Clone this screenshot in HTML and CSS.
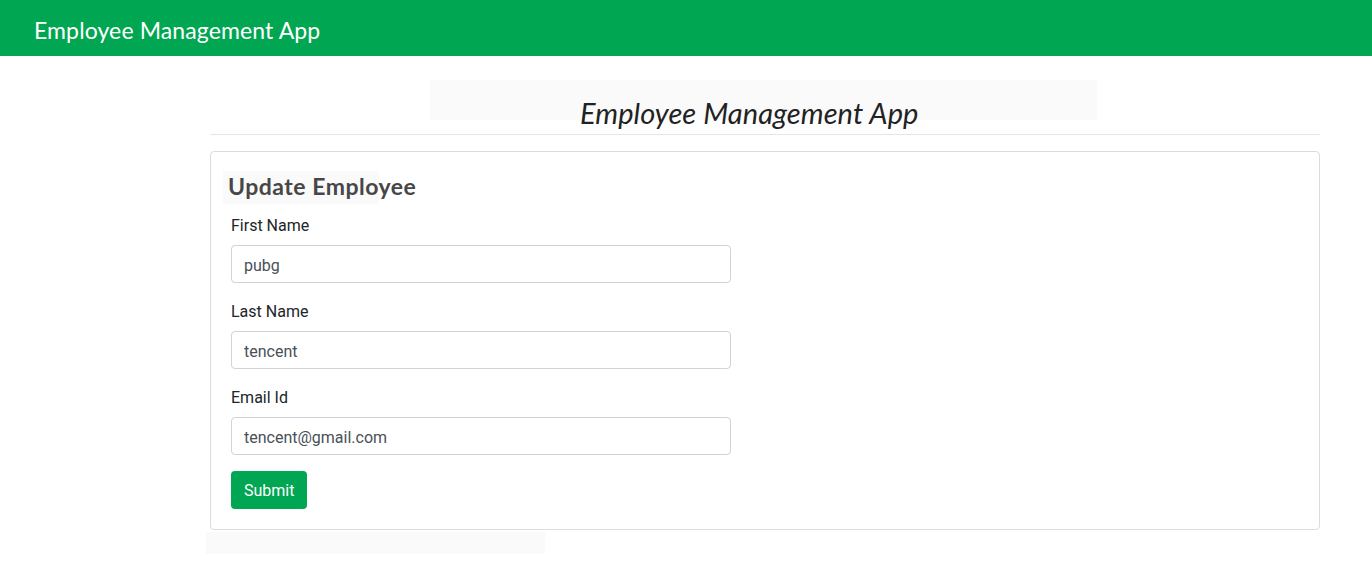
FILE: index.html
```html
<!DOCTYPE html>
<html>
<head>
<meta charset="utf-8">
<title>Employee Management App</title>
<link rel="stylesheet" href="styles.css">
</head>
<body>
<header class="navbar">
  <span class="brand">Employee Management App</span>
</header>
<main class="container">
  <div class="banner">
    <h1 class="banner-title">Employee Management App</h1>
  </div>
  <hr class="divider">
  <section class="card">
    <h2 class="card-title">Update Employee</h2>
    <form class="form">
      <div class="field">
        <label class="label">First Name</label>
        <input class="input" type="text" value="pubg">
      </div>
      <div class="field">
        <label class="label">Last Name</label>
        <input class="input" type="text" value="tencent">
      </div>
      <div class="field">
        <label class="label">Email Id</label>
        <input class="input" type="text" value="tencent@gmail.com">
      </div>
      <button class="btn" type="button">Submit</button>
    </form>
  </section>
  <div class="footer-box"></div>
</main>
</body>
</html>
```

FILE: styles.css
```css
* { box-sizing: border-box; }
html, body { margin: 0; padding: 0; background: #fff; }
body { font-family: Roboto, "Liberation Sans", sans-serif; color: #212529; }

.navbar {
  height: 56px;
  background: #00a651;
  display: flex;
  align-items: center;
  padding-left: 34px;
}
.brand {
  font-family: Lato, "Open Sans", sans-serif;
  color: #fff;
  font-size: 23px;
  letter-spacing: 0.12px;
  line-height: 1;
  padding-top: 4px;
}

.container {
  margin-left: 210px;
  margin-right: 52px;
  padding-top: 24px;
}
.banner {
  margin-left: 220px;
  width: 667px;
  height: 40px;
  background: #fafafa;
}
.banner-title {
  margin: 0;
  padding-top: 16px;
  padding-left: 150px;
  font-family: Lato, "Open Sans", sans-serif;
  font-style: italic;
  font-weight: 400;
  font-size: 29px;
  letter-spacing: 0.08px;
  line-height: 34px;
  color: #222;
  white-space: nowrap;
}
.divider {
  margin: 14px 0 16px;
  border: 0;
  border-top: 1px solid #e5e5e5;
}

.card {
  border: 1px solid #dcdcdc;
  border-radius: 4px;
  padding: 19px 20px 20px;
}
.card-title {
  width: 156px;
  margin: 0 0 0 -8px;
  padding: 2px 0 5px 5px;
  background: #fafafa;
  font-family: Lato, "Open Sans", sans-serif;
  font-weight: 700;
  font-size: 23px;
  letter-spacing: 0.5px;
  line-height: 26px;
  color: #474747;
  white-space: nowrap;
}
.form { display: flex; flex-direction: column; align-items: flex-start; margin-top: 10px; }
.field { display: flex; flex-direction: column; margin-bottom: 17px; }
.label {
  font-size: 16px;
  line-height: 24px;
  margin-bottom: 7px;
  color: #212529;
}
.input {
  width: 500px;
  height: 38px;
  border: 1px solid #ced4da;
  border-radius: 4px;
  padding: 7px 12px 5px;
  font-family: Roboto, "Liberation Sans", sans-serif;
  font-size: 16px;
  color: #495057;
  background: #fff;
}
.btn {
  height: 38px;
  margin-top: -1px;
  padding: 6px 13px;
  border: 0;
  border-radius: 4px;
  background: #00a651;
  color: #fff;
  font-family: Roboto, "Liberation Sans", sans-serif;
  font-size: 16px;
}
.footer-box {
  margin-left: -4px;
  margin-top: 2px;
  width: 339px;
  height: 22px;
  background: #fafafa;
}
```
